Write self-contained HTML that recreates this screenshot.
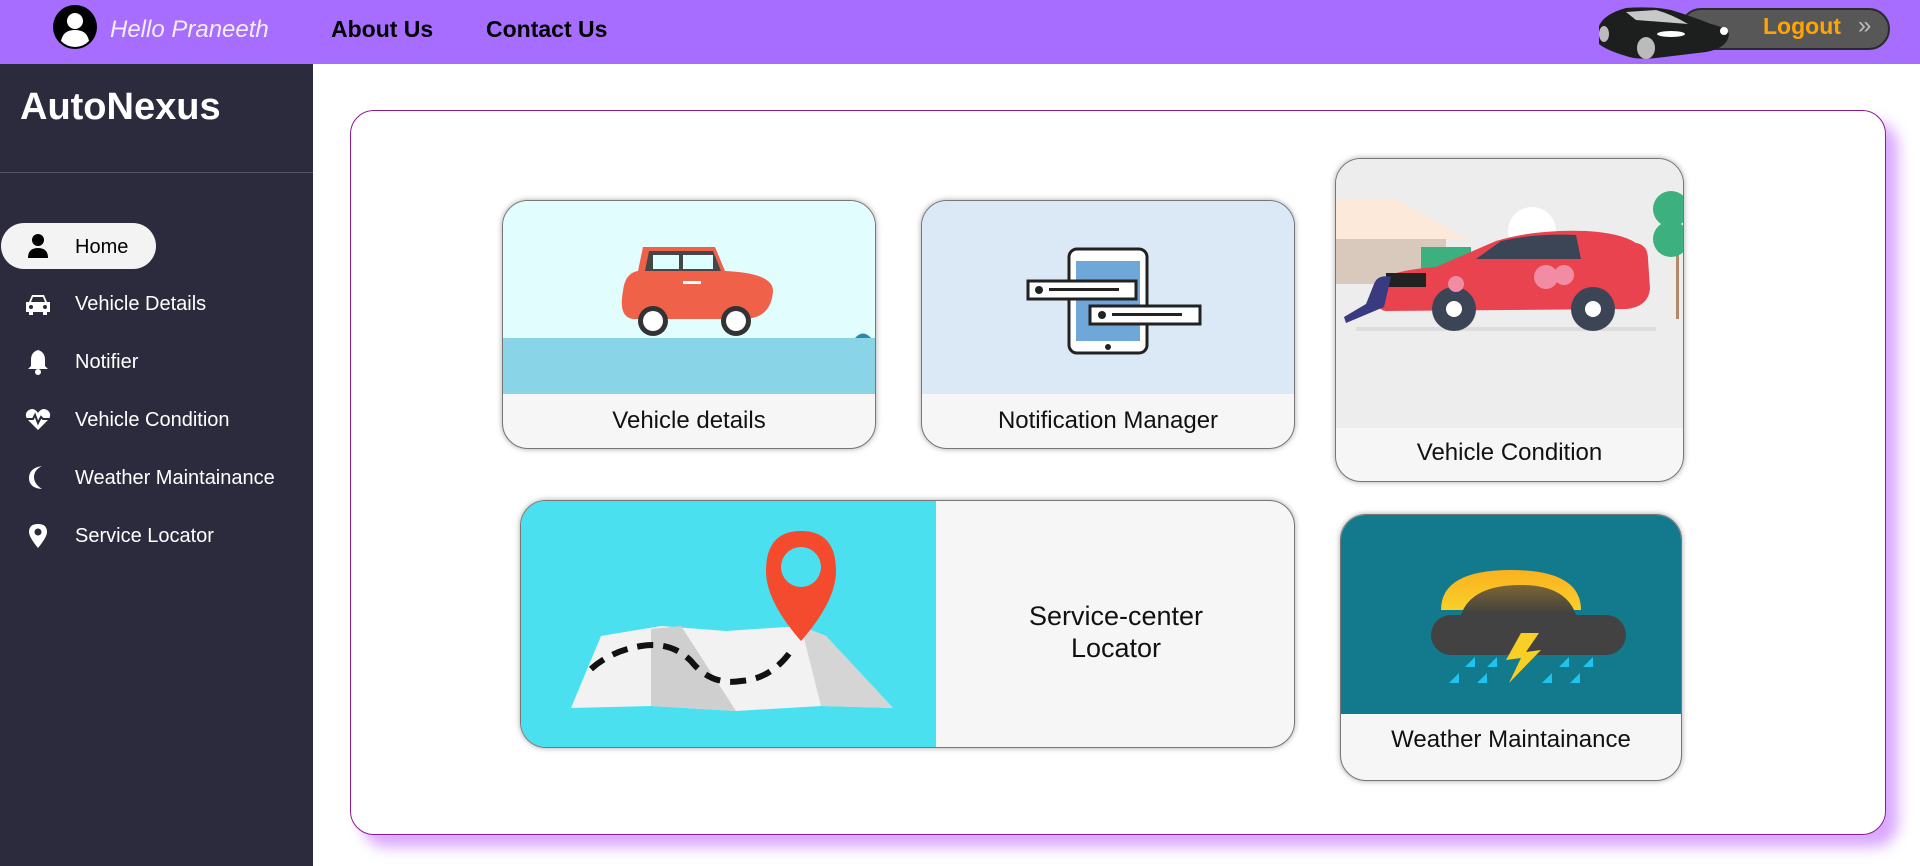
<!DOCTYPE html>
<html><head><meta charset="utf-8"><style>
*{margin:0;padding:0;box-sizing:border-box}
body{width:1920px;height:866px;overflow:hidden;background:#fff;font-family:"Liberation Sans",sans-serif;position:relative}
.hdr{position:absolute;left:0;top:0;width:1920px;height:64px;background:#a66dfe}
.abs{position:absolute}
.side{position:absolute;left:0;top:64px;width:313px;height:802px;background:#2c2b3e}
.nav{position:absolute;left:75px;color:#fff;font-size:20px;line-height:24px}
.ic{position:absolute;left:24px;width:28px;height:28px}
.main{position:absolute;left:350px;top:110px;width:1536px;height:725px;border:1px solid #8b1a93;border-radius:24px;box-shadow:12px 12px 14px #d9a8ff}
.card{position:absolute;border:1px solid #777;border-radius:26px;overflow:hidden;background:#f6f6f6;box-shadow:0 0 6px rgba(0,0,0,.35)}
.lbl{position:absolute;left:0;right:0;text-align:center;font-size:24px;color:#111}
</style></head><body>
<div class="hdr">
<svg class="abs" style="left:53px;top:5px" width="44" height="44" viewBox="0 0 44 44"><circle cx="22" cy="22" r="22" fill="#000"/><circle cx="22" cy="16" r="8" fill="#fff"/><path d="M8 36 Q10 25 22 25 Q34 25 36 36 Q30 42 22 42 Q14 42 8 36Z" fill="#fff"/></svg>
<div class="abs" style="left:110px;top:16px;font-size:24px;font-style:italic;color:#f4ecff">Hello Praneeth</div>
<div class="abs" style="left:331px;top:16px;font-size:23px;font-weight:bold;color:#000">About Us</div>
<div class="abs" style="left:486px;top:16px;font-size:23px;font-weight:bold;color:#000">Contact Us</div>
<div class="abs" style="left:1680px;top:8px;width:210px;height:42px;border-radius:21px;background:#575757;border:2px solid #2a2a2a"></div>
<div class="abs" style="left:1763px;top:13px;font-size:23px;font-weight:bold;color:#ffa500">Logout</div>
<div class="abs" style="left:1858px;top:12px;font-size:24px;color:#bbb">»</div>
<svg class="abs" style="left:1596px;top:4px" width="136" height="56" viewBox="0 0 136 56"><path d="M3 22 Q8 10 30 4 Q55 2 75 6 Q95 12 115 20 Q132 24 133 30 Q132 44 110 48 L60 54 Q40 56 30 52 Q10 46 3 40Z" fill="#1d1f1e"/><ellipse cx="8" cy="30" rx="5" ry="8" fill="#bbb"/><ellipse cx="50" cy="44" rx="9" ry="11" fill="#bbb"/><ellipse cx="75" cy="30" rx="14" ry="3" fill="#fff"/><circle cx="128" cy="27" r="4" fill="#fff"/><path d="M30 8 L60 6 Q75 10 92 20 L40 16Z" fill="#c8c8c8"/></svg>
</div>
<div class="side">
<div class="abs" style="left:20px;top:22px;font-size:38px;font-weight:bold;color:#fff">AutoNexus</div>
<div class="abs" style="left:0;top:108px;width:313px;height:1px;background:#555566"></div>
<div class="abs" style="left:1px;top:159px;width:155px;height:46px;border-radius:23px;background:#f3f3f3"></div>
</div>
<div class="nav" style="top:235px;color:#000">Home</div>
<div class="nav" style="top:292px">Vehicle Details</div>
<div class="nav" style="top:350px">Notifier</div>
<div class="nav" style="top:408px">Vehicle Condition</div>
<div class="nav" style="top:466px">Weather Maintainance</div>
<div class="nav" style="top:524px">Service Locator</div>
<svg class="ic" style="top:232px" viewBox="0 0 28 28"><circle cx="14" cy="8" r="6" fill="#000"/><path d="M4 26 Q4 16 14 16 Q24 16 24 26Z" fill="#000"/></svg>
<svg class="ic" style="top:290px" viewBox="0 0 28 28"><path d="M5 12 L8 5 H20 L23 12 H26 V22 H23 V25 H19 V22 H9 V25 H5 V22 H2 V12Z M9 7 L7 12 H21 L19 7Z" fill="#fff" fill-rule="evenodd"/><circle cx="7" cy="17" r="2" fill="#2c2b3e"/><circle cx="21" cy="17" r="2" fill="#2c2b3e"/></svg>
<svg class="ic" style="top:347px" viewBox="0 0 28 28"><path d="M14 3 Q21 5 21 13 V19 L24 22 H4 L7 19 V13 Q7 5 14 3Z" fill="#fff"/><circle cx="14" cy="25" r="3" fill="#fff"/></svg>
<svg class="ic" style="top:405px" viewBox="0 0 28 28"><path d="M14 25 L3 14 Q0 8 5 5 Q10 2 14 8 Q18 2 23 5 Q28 8 25 14Z" fill="#fff"/><path d="M2 14 H9 L11 10 L14 18 L17 12 L19 14 H26" stroke="#2c2b3e" stroke-width="2" fill="none"/></svg>
<svg class="ic" style="top:463px" viewBox="0 0 28 28"><path d="M18 3 Q5 5 5 15 Q5 25 18 26 Q10 21 10 14 Q10 7 18 3Z" fill="#fff"/></svg>
<svg class="ic" style="top:521px" viewBox="0 0 28 28"><path d="M14 27 Q5 16 5 11 Q5 3 14 3 Q23 3 23 11 Q23 16 14 27Z" fill="#fff"/><circle cx="14" cy="11" r="3.5" fill="#2c2b3e"/></svg>

<div class="main"></div>

<div class="card" style="left:502px;top:200px;width:374px;height:249px">
<svg class="abs" style="left:0;top:0" width="374" height="193" viewBox="0 0 374 193"><rect width="374" height="193" fill="#e2fdfd"/><rect y="137" width="374" height="56" fill="#89d5e7"/><path d="M352 137 Q360 128 368 137Z" fill="#2a8aa8"/><path d="M135 70 L140 46 H212 L222 70 Q270 72 270 90 Q268 118 240 118 H130 Q115 116 120 90 Q122 72 135 70Z" fill="#f0614a"/><path d="M142 70 L146 50 H210 L218 70Z" fill="#464646"/><rect x="150" y="54" width="26" height="14" fill="#dff"/><rect x="180" y="54" width="30" height="14" fill="#dff"/><rect x="180" y="80" width="18" height="3" fill="#fff"/><circle cx="150" cy="120" r="15" fill="#333"/><circle cx="150" cy="120" r="10" fill="#fff"/><circle cx="233" cy="120" r="15" fill="#333"/><circle cx="233" cy="120" r="10" fill="#fff"/></svg>
<div class="lbl" style="top:206px">Vehicle details</div>
</div>
<div class="card" style="left:921px;top:200px;width:374px;height:249px">
<svg class="abs" style="left:0;top:0" width="374" height="193" viewBox="0 0 374 193"><rect width="374" height="193" fill="#dae9f5"/><rect x="147" y="48" width="78" height="104" rx="8" fill="#fff" stroke="#222" stroke-width="3"/><rect x="154" y="60" width="64" height="80" fill="#6fa7d9"/><circle cx="186" cy="146" r="3" fill="#222"/><rect x="106" y="80" width="108" height="18" fill="#fff" stroke="#222" stroke-width="3"/><circle cx="117" cy="89" r="4" fill="#222"/><rect x="127" y="87" width="70" height="3" fill="#222"/><rect x="168" y="105" width="110" height="18" fill="#fff" stroke="#222" stroke-width="3"/><circle cx="180" cy="114" r="4" fill="#222"/><rect x="190" y="112" width="70" height="3" fill="#222"/></svg>
<div class="lbl" style="top:206px">Notification Manager</div>
</div>
<div class="card" style="left:1335px;top:158px;width:349px;height:324px">
<svg class="abs" style="left:0;top:0" width="349" height="269" viewBox="0 0 349 269"><rect width="349" height="269" fill="#ededed"/><path d="M0 40 L60 40 L130 80 L0 80Z" fill="#fde9da"/><rect x="0" y="80" width="110" height="45" fill="#d9c8bc"/><circle cx="196" cy="72" r="24" fill="#fff"/><rect x="340" y="70" width="3" height="90" fill="#b08a6a"/><circle cx="335" cy="50" r="18" fill="#3db07f"/><circle cx="335" cy="80" r="18" fill="#3db07f"/><rect x="85" y="88" width="50" height="40" fill="#3db07f"/><rect x="20" y="168" width="300" height="4" fill="#ddd"/><path d="M38 128 Q45 112 100 108 Q130 95 160 82 Q200 70 250 72 Q285 74 300 84 Q312 86 312 100 L314 130 Q312 148 290 150 L50 152 Q36 150 38 128Z" fill="#e8434f"/><path d="M140 100 L165 82 Q200 74 240 76 L245 100Z" fill="#3b4556"/><rect x="50" y="114" width="40" height="14" fill="#222"/><circle cx="118" cy="150" r="22" fill="#3b4556"/><circle cx="118" cy="150" r="8" fill="#fff"/><circle cx="257" cy="150" r="22" fill="#3b4556"/><circle cx="257" cy="150" r="8" fill="#fff"/><path d="M8 158 L30 145 L38 125 Q42 115 55 118 L48 148 L10 164Z" fill="#3a3a80"/><circle cx="120" cy="125" r="8" fill="#f28ca5"/><circle cx="210" cy="118" r="12" fill="#f28ca5"/><circle cx="228" cy="116" r="10" fill="#f28ca5"/></svg>
<div class="lbl" style="top:280px">Vehicle Condition</div>
</div>
<div class="card" style="left:520px;top:500px;width:775px;height:248px">
<svg class="abs" style="left:0;top:0" width="415" height="248" viewBox="0 0 415 248"><rect width="415" height="248" fill="#4be0ef"/><path d="M50 207 L80 135 L140 125 L205 130 L280 125 L305 135 L372 207 L300 205 L215 210 L130 205Z" fill="#f2f2f2"/><path d="M130 128 L160 125 L215 210 L130 205Z" fill="#cfcfcf"/><path d="M280 125 L305 135 L372 207 L300 205Z" fill="#d5d5d5"/><path d="M70 168 Q90 150 120 145 Q150 140 170 160 Q190 185 220 180 Q250 178 270 150" stroke="#111" stroke-width="6" fill="none" stroke-dasharray="16 10"/><path d="M280 140 Q245 100 245 70 Q245 30 280 30 Q315 30 315 70 Q315 100 280 140Z" fill="#f44a2e"/><circle cx="280" cy="66" r="20" fill="#4be0ef"/></svg>
<div class="abs" style="left:415px;top:0;width:360px;height:248px;text-align:center;font-size:27px;line-height:32px;color:#111;padding-top:99px">Service-center<br>Locator</div>
</div>
<div class="card" style="left:1340px;top:514px;width:342px;height:267px">
<svg class="abs" style="left:0;top:0" width="342" height="199" viewBox="0 0 342 199"><defs><linearGradient id="s" x1="0" y1="0" x2="0" y2="1"><stop offset="0" stop-color="#fbb11f"/><stop offset="1" stop-color="#f8d02a"/></linearGradient><linearGradient id="d" x1="0" y1="0" x2="0" y2="1"><stop offset="0" stop-color="#7a6534"/><stop offset="1" stop-color="#404040"/></linearGradient></defs><rect width="342" height="199" fill="#137a8d"/><path d="M100 95 Q100 55 170 55 Q240 55 240 95Z" fill="url(#s)"/><path d="M120 100 Q130 70 180 70 Q225 70 235 100Z" fill="url(#d)"/><rect x="90" y="100" width="195" height="40" rx="20" fill="#424242"/><path d="M180 118 L165 145 L180 143 L168 168 L200 135 L185 137 L198 118Z" fill="#f8cf25"/><g fill="#1fc3ee"><path d="M124 152 l10-10 v10z"/><path d="M146 152 l10-10 v10z"/><path d="M218 152 l10-10 v10z"/><path d="M242 152 l10-10 v10z"/><path d="M108 168 l10-10 v10z"/><path d="M136 168 l10-10 v10z"/><path d="M201 168 l10-10 v10z"/><path d="M229 168 l10-10 v10z"/></g></svg>
<div class="lbl" style="top:211px">Weather Maintainance</div>
</div>
</body></html>
